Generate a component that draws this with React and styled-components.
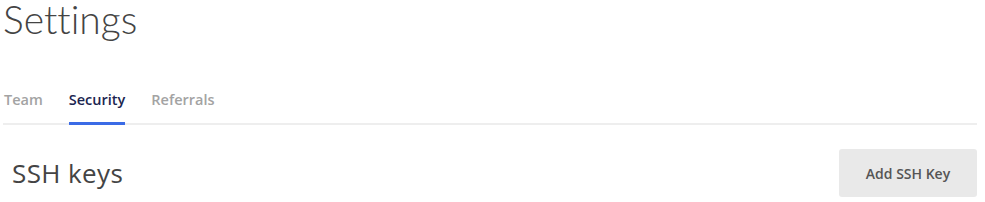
import React from "react";
import styled, { createGlobalStyle } from "styled-components";

const Global = createGlobalStyle`
  html, body { margin: 0; padding: 0; background: #fff; }
  body { font-family: "Open Sans", "Lato", sans-serif; }
`;

const Page = styled.div`
  width: 974px;
  padding: 0 8px 0 3px;
`;

const Title = styled.h1`
  margin: 0;
  font-family: "Lato", sans-serif;
  font-size: 39px;
  line-height: 38px;
  font-weight: 300;
  font-variant-ligatures: none;
  color: #444;
`;

const Tabs = styled.nav`
  display: flex;
  gap: 26px;
  margin-top: 52px;
  border-bottom: 2px solid #eee;
  padding-left: 1px;
`;

const Tab = styled.div`
  font-size: 14.5px;
  line-height: 20px;
  font-weight: 600;
  color: ${(p) => (p.$active ? "#1b2550" : "#a3a3a3")};
  padding-bottom: 12px;
  margin-bottom: -2px;
  border-bottom: 3px solid ${(p) => (p.$active ? "#3b6be6" : "transparent")};
`;

const Section = styled.div`
  display: flex;
  justify-content: space-between;
  align-items: center;
  margin-top: 24px;
  padding-left: 9px;
`;

const Heading = styled.h2`
  margin: 0;
  font-size: 26px;
  letter-spacing: 0.4px;
  font-weight: 400;
  color: #444;
`;

const Button = styled.button`
  width: 138px;
  height: 48px;
  border: none;
  border-radius: 3px;
  background: #e9e9e9;
  color: #555;
  font-family: "Open Sans", sans-serif;
  font-size: 14px;
  font-weight: 600;
`;

export default function App() {
  return (
    <Page>
      <Global />
      <Title>Settings</Title>
      <Tabs>
        <Tab>Team</Tab>
        <Tab $active>Security</Tab>
        <Tab>Referrals</Tab>
      </Tabs>
      <Section>
        <Heading>SSH keys</Heading>
        <Button>Add SSH Key</Button>
      </Section>
    </Page>
  );
}
